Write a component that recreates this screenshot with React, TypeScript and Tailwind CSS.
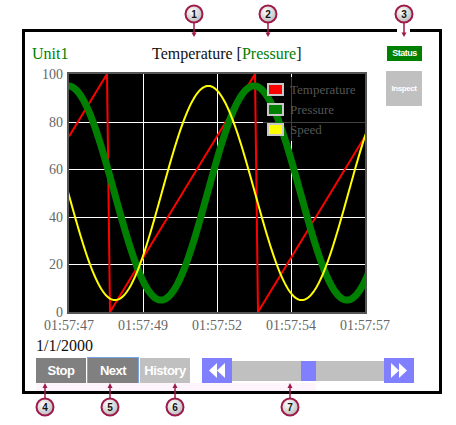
import React from 'react';

const X0 = 69;
const X1 = 365;
const YB = 312;
const K = 2.38;
const vy = (v: number) => YB - v * K;

function curve(fn: (x: number) => number) {
  const pts: string[] = [];
  for (let x = X0 - 4; x <= X1 + 4; x += 1) pts.push(`${x},${vy(fn(x)).toFixed(2)}`);
  return 'M' + pts.join(' L');
}

const red = [
  [69, 73.8],
  [107, 100],
  [110, 0],
  [255, 100],
  [258, 0],
  [366, 74.5],
]
  .map(([x, v], i) => `${i ? 'L' : 'M'}${x},${vy(v).toFixed(2)}`)
  .join(' ');

const green = curve((x) => 50 + 45 * Math.cos((2 * Math.PI * (x - 254)) / 186));
const yellow = curve((x) => 50 - 45 * Math.cos((2 * Math.PI * (x - 115)) / 186.7));

const yTicks = [100, 80, 60, 40, 20, 0];
const xTicks = [
  [69, '01:57:47'],
  [143, '01:57:49'],
  [217, '01:57:52'],
  [291, '01:57:54'],
  [365, '01:57:57'],
] as const;

const legend = [
  ['Temperature', '#ff0000'],
  ['Pressure', '#008000'],
  ['Speed', '#ffff00'],
] as const;

function Chart() {
  return (
    <svg
      width={361}
      height={272}
      viewBox="25 64 361 272"
      className="block overflow-visible"
      fontFamily="'Liberation Serif', 'Times New Roman', serif"
    >
      <defs>
        <clipPath id="plot">
          <rect x={69} y={74} width={296} height={238} />
        </clipPath>
      </defs>
      <rect x={68} y={73} width={298} height={240} fill="#000" stroke="#555" strokeWidth={2} />
      <g stroke="#fff" strokeWidth={1}>
        {[143.5, 217.5, 291.5].map((x) => (
          <line key={x} x1={x} y1={74} x2={x} y2={312} />
        ))}
        {[80, 60, 40, 20].map((v) => (
          <line key={v} x1={69} y1={Math.round(vy(v)) + 0.5} x2={365} y2={Math.round(vy(v)) + 0.5} />
        ))}
      </g>
      {/* legend backdrop only dims the grid, series stay bright */}
      <rect x={263} y={77} width={102} height={64} fill="#000" fillOpacity={0.75} />
      <g clipPath="url(#plot)" fill="none" strokeLinejoin="round">
        <path d={red} stroke="#ff0000" strokeWidth={2} />
        <path d={green} stroke="#008000" strokeWidth={7} />
        <path d={yellow} stroke="#ffff00" strokeWidth={2} />
      </g>
      {legend.map(([label, color], i) => (
        <g key={label}>
          <rect x={268} y={84 + i * 20} width={15} height={11} fill={color} stroke="#c8c8c8" strokeWidth={2} />
          <text x={290} y={94 + i * 20} fontSize={13} fill="#555">
            {label}
          </text>
        </g>
      ))}
      <g fontSize={14} fill="#666">
        {yTicks.map((v) => (
          <text key={v} x={63} y={vy(v) + 5} textAnchor="end">
            {v}
          </text>
        ))}
        {xTicks.map(([x, t]) => (
          <text key={t} x={x} y={330} textAnchor="middle">
            {t}
          </text>
        ))}
      </g>
    </svg>
  );
}

function DoubleArrow({ dir }: { dir: 'left' | 'right' }) {
  return (
    <svg width={16} height={15} viewBox="0 0 16 15" className={dir === 'right' ? 'rotate-180' : ''}>
      <polygon points="8,0 0,7.5 8,15" fill="#fff" />
      <polygon points="16,0 8,7.5 16,15" fill="#fff" />
    </svg>
  );
}

const callouts = [
  { n: 1, cx: 194, cy: 14, up: false },
  { n: 2, cx: 268, cy: 14, up: false },
  { n: 3, cx: 404, cy: 14, up: false },
  { n: 4, cx: 45, cy: 407, up: true },
  { n: 5, cx: 110, cy: 407, up: true },
  { n: 6, cx: 175, cy: 407, up: true },
  { n: 7, cx: 290, cy: 407, up: true },
];

function Callouts() {
  return (
    <svg width={456} height={425} className="absolute left-0 top-0 pointer-events-none">
      <defs>
        <radialGradient id="bubble" cx="40%" cy="35%" r="70%">
          <stop offset="0%" stopColor="#ffffff" />
          <stop offset="100%" stopColor="#b8b8b8" />
        </radialGradient>
      </defs>
      <rect x={397} y={28} width={13} height={5} fill="#fff" />
      {callouts.map(({ n, cx, cy, up }) => (
        <g key={n}>
          {up ? (
            <>
              <line x1={cx} y1={cy - 9} x2={cx} y2={387} stroke="#9e1a4a" strokeWidth={1.5} />
              <polygon points={`${cx - 2.5},388 ${cx + 2.5},388 ${cx},383`} fill="#9e1a4a" />
            </>
          ) : (
            <>
              <line x1={cx} y1={cy + 9} x2={cx} y2={33} stroke="#9e1a4a" strokeWidth={1.5} />
              <polygon points={`${cx - 2.5},32.5 ${cx + 2.5},32.5 ${cx},37`} fill="#9e1a4a" />
            </>
          )}
          <circle cx={cx} cy={cy} r={8.5} fill="url(#bubble)" stroke="#9e1a4a" strokeWidth={2} />
          <text
            x={cx}
            y={cy + 3.5}
            textAnchor="middle"
            fontSize={10}
            fontWeight="bold"
            fontFamily="'Liberation Sans', Arial, sans-serif"
            fill="#111"
          >
            {n}
          </text>
        </g>
      ))}
    </svg>
  );
}

export default function App() {
  return (
    <div className="relative w-[456px] h-[425px] bg-white overflow-hidden pt-[29px] pl-[22px] font-['Liberation_Serif','Times_New_Roman',serif]">
      <div className="w-[420px] h-[365px] border-[3px] border-black flex flex-col">
        <div className="flex">
          <div className="w-[361px]">
            <div className="mt-[12px] h-[20px] flex text-[16px] leading-[20px]">
              <div className="w-[127px] pl-[7px] text-[#008000]">Unit1</div>
              <div className="text-[#111]">
                Temperature [<span className="text-[#008000]">Pressure</span>]
              </div>
            </div>
            <Chart />
          </div>
          <div className="w-[36px] flex flex-col font-['Liberation_Sans',Arial,sans-serif] font-bold text-white">
            <div className="mt-[14px] ml-[1px] w-[35px] h-[15px] bg-[#008000] flex items-center justify-center text-[9px] tracking-[-0.5px]">
              Status
            </div>
            <div className="mt-[10px] w-[36px] h-[35px] bg-[#c0c0c0] flex items-center justify-center text-[8px] tracking-[-0.4px]">
              Inspect
            </div>
          </div>
        </div>
        <div className="pl-[11px] h-[22px] text-[16px] leading-[20px] text-[#111]">1/1/2000</div>
        <div className="pl-[11px] flex h-[25px] font-['Liberation_Sans',Arial,sans-serif] font-bold text-white text-[13px] tracking-[-0.5px]">
          <div className="w-[50px] bg-[#808080] flex items-center justify-center">Stop</div>
          <div className="ml-[2px] w-[50px] bg-[#808080] ring-1 ring-[#79a6e8] flex items-center justify-center">
            Next
          </div>
          <div className="ml-[2px] w-[50px] bg-[#c0c0c0] flex items-center justify-center">History</div>
          <div className="ml-[12px] flex">
            <div className="w-[30px] bg-[#8080ff] flex items-center justify-center">
              <DoubleArrow dir="left" />
            </div>
            <div className="w-[152px] flex items-center">
              <div className="w-full h-[20px] bg-[#c0c0c0] flex">
                <div className="ml-[69px] w-[15px] h-[20px] bg-[#8080ff]" />
              </div>
            </div>
            <div className="w-[30px] bg-[#8080ff] flex items-center justify-center">
              <DoubleArrow dir="right" />
            </div>
          </div>
        </div>
        <div className="ml-[11px] w-[280px] h-[8px] bg-[#fdf5fb]" />
      </div>
      <Callouts />
    </div>
  );
}
